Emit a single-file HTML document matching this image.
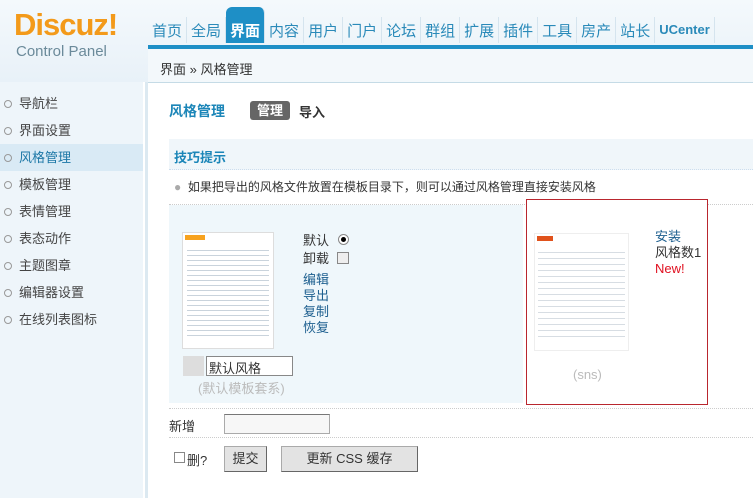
<!DOCTYPE html>
<html><head><meta charset="utf-8"><style>
*{margin:0;padding:0;box-sizing:border-box}
body{width:753px;height:498px;overflow:hidden;font:12px "Liberation Sans","Noto Sans CJK SC",sans-serif;background:#fff;color:#333;position:relative}
.a{position:absolute}
#hd{left:0;top:0;width:753px;height:82px;background:linear-gradient(#f4f9fc,#e8f1f8)}
#logo{left:14px;top:7px;font:bold 31px "Liberation Sans",sans-serif;color:#f39a1a;letter-spacing:-1px}
#cp{left:16px;top:43px;font-size:15px;color:#6b8a9a}
#nav{left:148px;top:17px;height:28px;display:flex}
#nav span{font-size:15px;color:#2a8ab9;padding:3px 4px 0;border-right:1px solid #d5e4ee;height:26px}
#nav span.on{background:#1e8fc6;color:#fff;font-weight:bold;border-radius:6px 6px 0 0;margin-top:-10px;padding-top:13px;height:36px}
#bar{left:148px;top:45px;width:605px;height:4px;background:#1e8fc6}
#crumb{left:148px;top:49px;width:605px;height:34px;background:#f3f8fb;border-bottom:1px solid #c5dbe6;padding:10px 12px;font-size:13px;color:#333}
#side{left:0;top:82px;width:143px;height:416px;background:#eef5fa}
#sline{left:145px;top:82px;width:3px;height:416px;background:#dce9f1}
#side div{height:27px;line-height:27px;font-size:13px;color:#444;padding-left:19px;position:relative}
#side div:before{content:"";position:absolute;left:4px;top:10px;width:6px;height:6px;border:1px solid #999;border-radius:50%}
#side div.on{background:#d9eaf5;color:#1c77a6}
.lnk{color:#1d5f8f}
.btn{background:#e3e3e3;border:1px solid #aaa;border-right-color:#666;border-bottom-color:#666;font-size:13px;text-align:center;height:26px;line-height:24px}
</style></head><body>
<div id="hd" class="a"></div>
<div id="logo" class="a">Discuz!</div>
<div id="cp" class="a">Control Panel</div>
<div id="nav" class="a"><span>首页</span><span>全局</span><span class="on">界面</span><span>内容</span><span>用户</span><span>门户</span><span>论坛</span><span>群组</span><span>扩展</span><span>插件</span><span>工具</span><span>房产</span><span>站长</span><span style="font-weight:bold;font-size:13px;padding-top:5px">UCenter</span></div>
<div id="bar" class="a"></div>
<div id="crumb" class="a">界面 » 风格管理</div>
<div id="side" class="a" style="padding-top:8px">
<div>导航栏</div><div>界面设置</div><div class="on">风格管理</div><div>模板管理</div><div>表情管理</div><div>表态动作</div><div>主题图章</div><div>编辑器设置</div><div>在线列表图标</div></div>
<div id="sline" class="a"></div>
<div class="a" style="left:169px;top:101px;font-size:14px;font-weight:bold;color:#1c86b8">风格管理</div>
<div class="a" style="left:250px;top:101px;width:40px;height:19px;background:#666;color:#fff;border-radius:3px;font-weight:bold;font-size:13px;text-align:center;line-height:19px">管理</div>
<div class="a" style="left:299px;top:102px;font-size:13px;font-weight:bold;color:#333">导入</div>
<div class="a" style="left:169px;top:139px;width:584px;height:31px;background:#f0f6fa;border-bottom:1px dotted #cde;padding:8px 5px;font-weight:bold;color:#1c86b8;font-size:13px">技巧提示</div>
<div class="a" style="left:174px;top:178px;font-size:12px;color:#333"><span style="color:#aaa">●</span>&nbsp; 如果把导出的风格文件放置在模板目录下，则可以通过风格管理直接安装风格</div>
<div class="a" style="left:169px;top:204px;width:584px;border-top:1px dotted #ccc"></div>
<div class="a" style="left:169px;top:205px;width:354px;height:198px;background:#eff7fb"></div>
<div class="a" style="left:182px;top:232px;width:92px;height:117px;background:#fff;border:1px solid #ddd"><div style="background:#f7a21e;width:20px;height:5px;margin:2px"></div><div style="margin:6px 4px;height:90px;background:repeating-linear-gradient(#fff 0 4px,#c9d3dc 4px 5px)"></div></div>
<div class="a" style="left:303px;top:233px;font-size:13px;line-height:16px">默认<br><span style="display:block;margin-top:2px">卸载</span></div>
<div class="a" style="left:338px;top:234px;width:11px;height:11px;border:1px solid #888;border-radius:50%;background:#fff"><div style="width:5px;height:5px;background:#000;border-radius:50%;margin:2px"></div></div>
<div class="a" style="left:337px;top:252px;width:12px;height:12px;border:1px solid #888;background:#eee"></div>
<div class="a lnk" style="left:303px;top:272px;font-size:13px;line-height:16px">编辑<br>导出<br>复制<br>恢复</div>
<div class="a" style="left:183px;top:356px;width:21px;height:20px;background:#ddd"></div>
<div class="a" style="left:206px;top:356px;width:87px;height:20px;border:1px solid #888;background:#fff;padding:1px 2px;font-size:13px">默认风格</div>
<div class="a" style="left:198px;top:378px;font-size:13px;color:#bbb">(默认模板套系)</div>
<div class="a" style="left:526px;top:199px;width:182px;height:206px;border:1px solid #b9262e;background:#fff"></div>
<div class="a" style="left:534px;top:233px;width:95px;height:118px;background:#fff;border:1px solid #eee"><div style="background:#e0521c;width:16px;height:5px;margin:2px"></div><div style="margin:6px 3px;height:95px;background:repeating-linear-gradient(#fff 0 5px,#d7dde3 5px 6px)"></div></div>
<div class="a" style="left:655px;top:229px;font-size:13px;line-height:16px"><span class="lnk">安装</span><br>风格数1<br><span style="color:#e01020">New!</span></div>
<div class="a" style="left:573px;top:367px;font-size:13px;color:#bbb">(sns)</div>
<div class="a" style="left:169px;top:408px;width:584px;border-top:1px dotted #ccc"></div>
<div class="a" style="left:169px;top:416px;font-size:13px">新增</div>
<div class="a" style="left:224px;top:414px;width:106px;height:20px;border:1px solid #aaa;border-top-color:#777;background:#f7f7f7"></div>
<div class="a" style="left:169px;top:437px;width:584px;border-top:1px dotted #ccc"></div>
<div class="a" style="left:174px;top:452px;width:11px;height:11px;border:1px solid #888;background:#fff"></div>
<div class="a" style="left:187px;top:450px;font-size:13px">删?</div>
<div class="a btn" style="left:224px;top:446px;width:43px">提交</div>
<div class="a btn" style="left:281px;top:446px;width:137px">更新 CSS 缓存</div>
</body></html>
